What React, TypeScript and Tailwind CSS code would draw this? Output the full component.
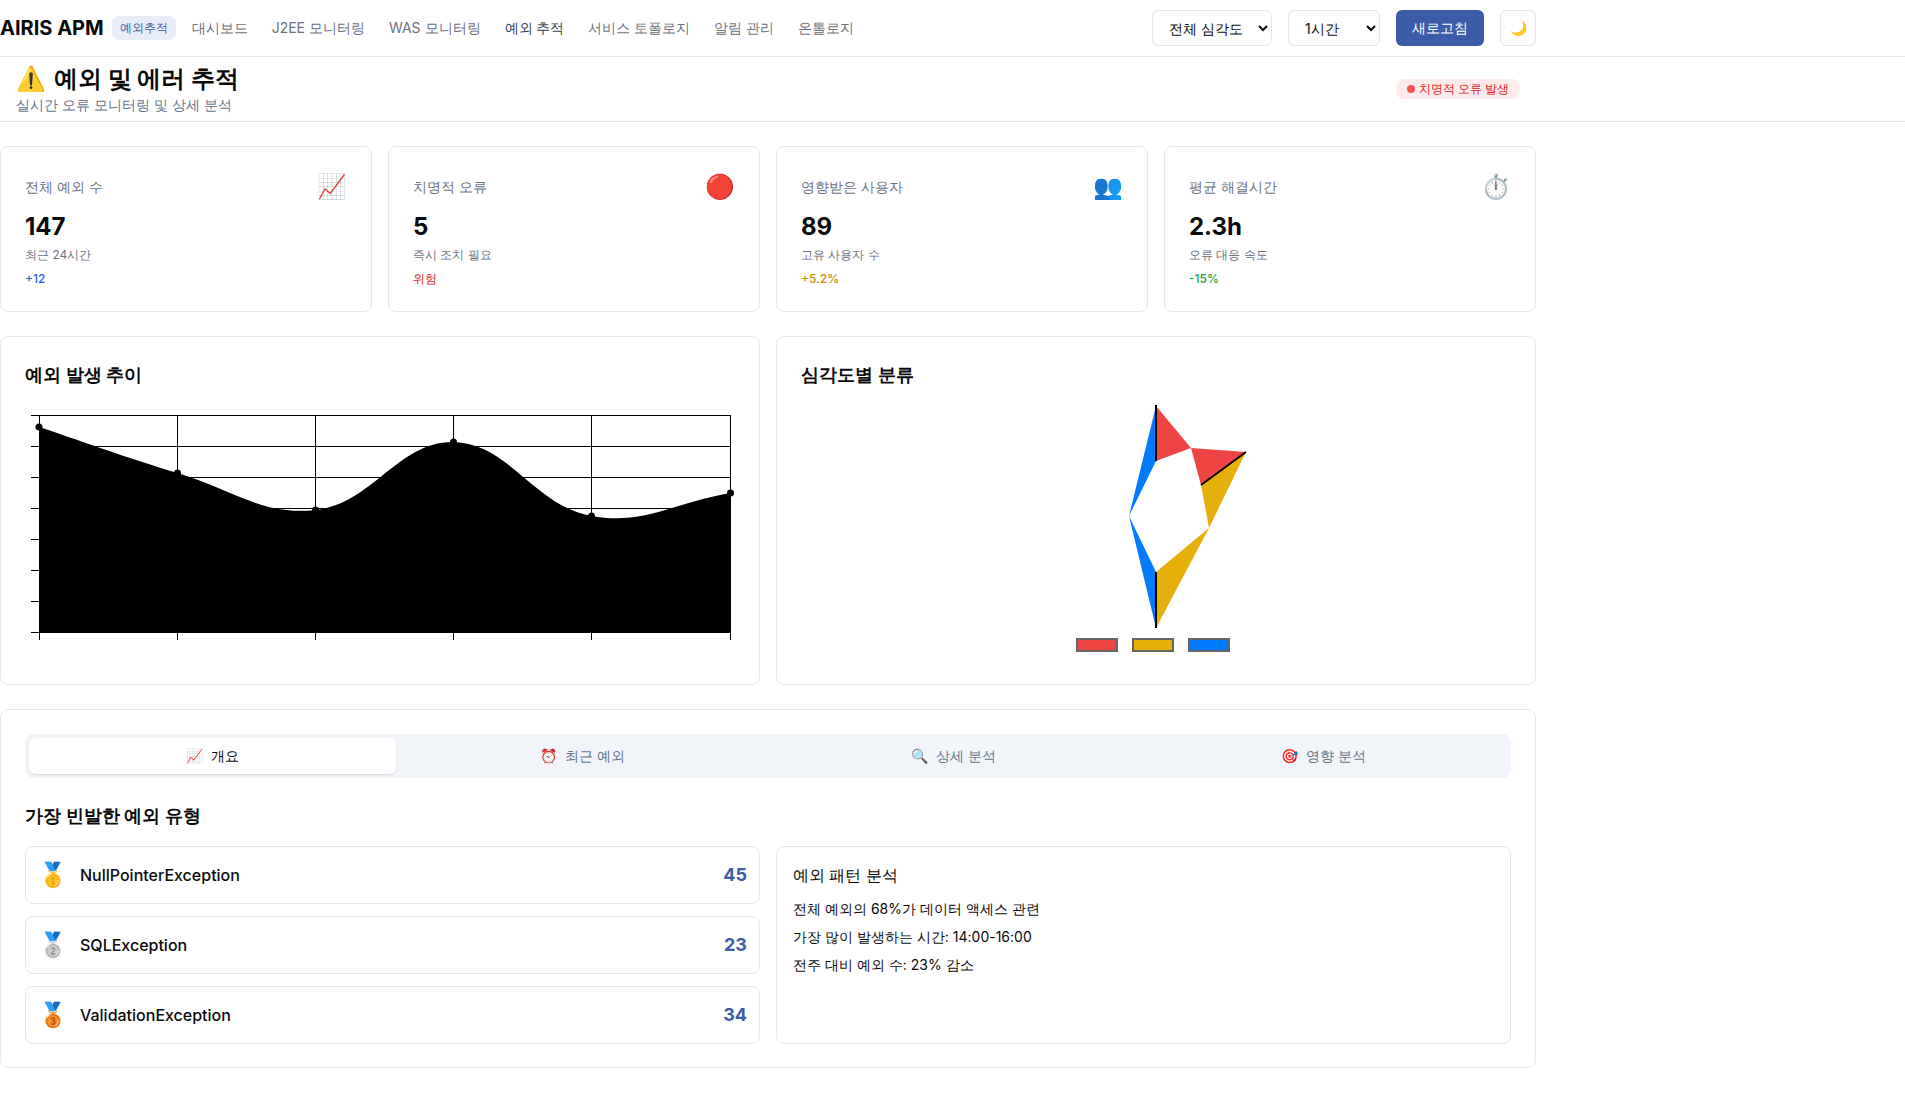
const navItems = ["대시보드", "J2EE 모니터링", "WAS 모니터링", "예외 추적", "서비스 토폴로지", "알림 관리", "온톨로지"];

const stats = [
  { title: "전체 예외 수", icon: "📈", value: "147", sub: "최근 24시간", delta: "+12", color: "text-[#2563eb]" },
  { title: "치명적 오류", icon: "🔴", value: "5", sub: "즉시 조치 필요", delta: "위험", color: "text-[#dc2626]" },
  { title: "영향받은 사용자", icon: "👥", value: "89", sub: "고유 사용자 수", delta: "+5.2%", color: "text-[#ca8a04]" },
  { title: "평균 해결시간", icon: "⏱️", value: "2.3h", sub: "오류 대응 속도", delta: "-15%", color: "text-[#16a34a]" },
];

const tabs = [
  { icon: "📈", label: "개요" },
  { icon: "⏰", label: "최근 예외" },
  { icon: "🔍", label: "상세 분석" },
  { icon: "🎯", label: "영향 분석" },
];

const topExceptions = [
  { medal: "🥇", name: "NullPointerException", count: 45 },
  { medal: "🥈", name: "SQLException", count: 23 },
  { medal: "🥉", name: "ValidationException", count: 34 },
];

const points: [number, number][] = [
  [39, 427],
  [177.5, 473],
  [315.5, 510],
  [453.5, 442],
  [591.5, 516],
  [730.5, 493],
];

// same spline the chart lib uses, tension 0.4
function buildCurve(pts: [number, number][]) {
  const t = 0.4;
  const ctrl = pts.map((cur, i) => {
    const prev = pts[i - 1] ?? cur;
    const next = pts[i + 1] ?? cur;
    const d01 = Math.hypot(cur[0] - prev[0], cur[1] - prev[1]);
    const d12 = Math.hypot(next[0] - cur[0], next[1] - cur[1]);
    const sum = d01 + d12 || 1;
    const fa = (t * d01) / sum;
    const fb = (t * d12) / sum;
    return {
      before: [cur[0] - fa * (next[0] - prev[0]), cur[1] - fa * (next[1] - prev[1])],
      after: [cur[0] + fb * (next[0] - prev[0]), cur[1] + fb * (next[1] - prev[1])],
    };
  });
  let d = `M${pts[0][0]} ${pts[0][1]}`;
  for (let i = 1; i < pts.length; i++) {
    const a = ctrl[i - 1].after;
    const b = ctrl[i].before;
    d += ` C${a[0]} ${a[1]} ${b[0]} ${b[1]} ${pts[i][0]} ${pts[i][1]}`;
  }
  return d;
}

const LineChart = () => {
  const xs = [39.5, 177.5, 315.5, 453.5, 591.5, 730.5];
  const ys = [415.5, 446.5, 477.5, 508.5, 539.5, 570.5, 601.5, 632.5];
  const curve = buildCurve(points);
  return (
    <svg viewBox="25 405 710 255" className="block w-[710px] h-[255px]">
      {xs.map((x) => (
        <line key={x} x1={x} x2={x} y1={415} y2={640} stroke="#000" />
      ))}
      {ys.map((y) => (
        <line key={y} x1={31} x2={731} y1={y} y2={y} stroke="#000" />
      ))}
      <path d={`${curve} L730.5 632.5 L39.5 632.5 Z`} fill="#000" />
      {points.map((p) => (
        <circle key={p[0]} cx={p[0]} cy={p[1]} r={3.5} fill="#000" />
      ))}
    </svg>
  );
};

const SeverityChart = () => {
  return (
    <svg viewBox="801 405 710 255" className="block w-[710px] h-[255px]">
      <polygon points="1156,406 1191,448 1156,461" fill="#ef4444" />
      <polygon points="1191,448 1246,452 1201,485" fill="#ef4444" />
      <polygon points="1201,485 1246,452 1209,528" fill="#e6b00a" />
      <polygon points="1209,528 1156,572 1156,628" fill="#e6b00a" />
      <polygon points="1129,516 1156,572 1156,628" fill="#007bff" />
      <polygon points="1129,516 1156,461 1156,406" fill="#007bff" />
      <line x1={1156} y1={405} x2={1156} y2={461} stroke="#000" strokeWidth={2} />
      <line x1={1246} y1={452} x2={1201} y2={485} stroke="#000" strokeWidth={2} />
      <line x1={1156} y1={572} x2={1156} y2={628} stroke="#000" strokeWidth={2} />
      <rect x={1077} y={639} width={40} height={12} fill="#ef4444" stroke="#666" strokeWidth={2} />
      <rect x={1133} y={639} width={40} height={12} fill="#e6b00a" stroke="#666" strokeWidth={2} />
      <rect x={1189} y={639} width={40} height={12} fill="#007bff" stroke="#666" strokeWidth={2} />
    </svg>
  );
};

const App = () => {
  return (
    <div className="min-h-[1094px] bg-white text-[#0a0a0a] font-[Inter,sans-serif]">
      <header className="border-b border-[#e5e7eb]">
        <div className="max-w-[1536px] h-14 flex items-center justify-between">
          <div className="flex items-center">
            <span className="text-xl font-bold">AIRIS APM</span>
            <span className="ml-2 h-6 w-16 flex items-center justify-center rounded-md bg-[#e8ecf7] text-xs text-[#3b5ca8]">예외추적</span>
            <nav className="ml-1 flex items-center">
              {navItems.map((item) => (
                <a key={item} className={`px-3 text-sm ${item === "예외 추적" ? "text-[#374151]" : "text-[#6b7280]"}`}>
                  {item}
                </a>
              ))}
            </nav>
          </div>
          <div className="flex items-center gap-4">
            <select className="h-9 w-[120px] px-3 text-sm bg-white border border-[#e2e8f0] rounded-md">
              <option>전체 심각도</option>
            </select>
            <select className="h-9 w-[92px] px-3 text-sm bg-white border border-[#e2e8f0] rounded-md">
              <option>1시간</option>
            </select>
            <button className="h-9 w-[88px] text-sm text-white bg-[#3b5ca8] rounded-md">새로고침</button>
            <button className="h-9 w-9 text-sm bg-white border border-[#e2e8f0] rounded-md">🌙</button>
          </div>
        </div>
      </header>

      <div className="border-b border-[#e5e7eb]">
        <div className="max-w-[1536px] h-16 px-4 flex items-center justify-between">
          <div>
            <h1 className="text-2xl font-bold leading-8 flex items-center gap-2">
              <span>⚠️</span>
              예외 및 에러 추적
            </h1>
            <p className="text-sm leading-5 text-[#64748b]">실시간 오류 모니터링 및 상세 분석</p>
          </div>
          <span className="h-5 w-[124px] flex items-center justify-center gap-1 rounded-lg bg-[#fdeaea] text-xs font-medium text-[#dc2626]">
            <span className="w-2 h-2 rounded-full bg-[#f05252]" />
            치명적 오류 발생
          </span>
        </div>
      </div>

      <main className="max-w-[1536px] pt-6 flex flex-col gap-6">
        <section className="grid grid-cols-4 gap-4">
          {stats.map((s) => (
            <div key={s.title} className="h-[166px] p-6 bg-white border border-[#e2e8f0] rounded-lg">
              <div className="flex items-center justify-between h-8 mb-2">
                <span className="text-sm text-[#6b7280]">{s.title}</span>
                <span className="text-2xl">{s.icon}</span>
              </div>
              <div className="text-2xl font-bold leading-8">{s.value}</div>
              <div className="mt-1 text-xs text-[#6b7280]">{s.sub}</div>
              <div className={`mt-2 text-xs font-medium ${s.color}`}>{s.delta}</div>
            </div>
          ))}
        </section>

        <section className="grid grid-cols-2 gap-4">
          <div className="h-[349px] p-6 border border-[#e2e8f0] rounded-lg">
            <h3 className="text-lg font-semibold leading-7 mb-4">예외 발생 추이</h3>
            <LineChart />
          </div>
          <div className="h-[349px] p-6 border border-[#e2e8f0] rounded-lg">
            <h3 className="text-lg font-semibold leading-7 mb-4">심각도별 분류</h3>
            <SeverityChart />
          </div>
        </section>

        <section className="h-[359px] p-6 border border-[#e2e8f0] rounded-lg">
          <div className="grid grid-cols-4 gap-1 p-1 bg-[#f1f5f9] rounded-lg">
            {tabs.map((tab, i) => (
              <button
                key={tab.label}
                className={`h-9 flex items-center justify-center gap-2 text-sm rounded-md ${
                  i === 0 ? "bg-white text-[#0a0a0a] shadow-sm" : "text-[#64748b]"
                }`}
              >
                <span>{tab.icon}</span>
                {tab.label}
              </button>
            ))}
          </div>

          <h3 className="mt-6 mb-4 text-lg font-semibold leading-7">가장 빈발한 예외 유형</h3>

          <div className="grid grid-cols-2 gap-4">
            <div className="flex flex-col gap-3">
              {topExceptions.map((e) => (
                <div key={e.name} className="h-[58px] px-3 flex items-center justify-between border border-[#e2e8f0] rounded-lg">
                  <div className="flex items-center gap-3">
                    <span className="text-2xl">{e.medal}</span>
                    <span className="font-medium">{e.name}</span>
                  </div>
                  <span className="text-lg font-bold text-[#3b5ca8]">{e.count}</span>
                </div>
              ))}
            </div>
            <div className="p-4 border border-[#e2e8f0] rounded-lg">
              <h4 className="font-medium leading-6 mb-2">예외 패턴 분석</h4>
              <div className="text-sm leading-7">
                <p>전체 예외의 68%가 데이터 액세스 관련</p>
                <p>가장 많이 발생하는 시간: 14:00-16:00</p>
                <p>전주 대비 예외 수: 23% 감소</p>
              </div>
            </div>
          </div>
        </section>
      </main>
    </div>
  );
};

export default App;
